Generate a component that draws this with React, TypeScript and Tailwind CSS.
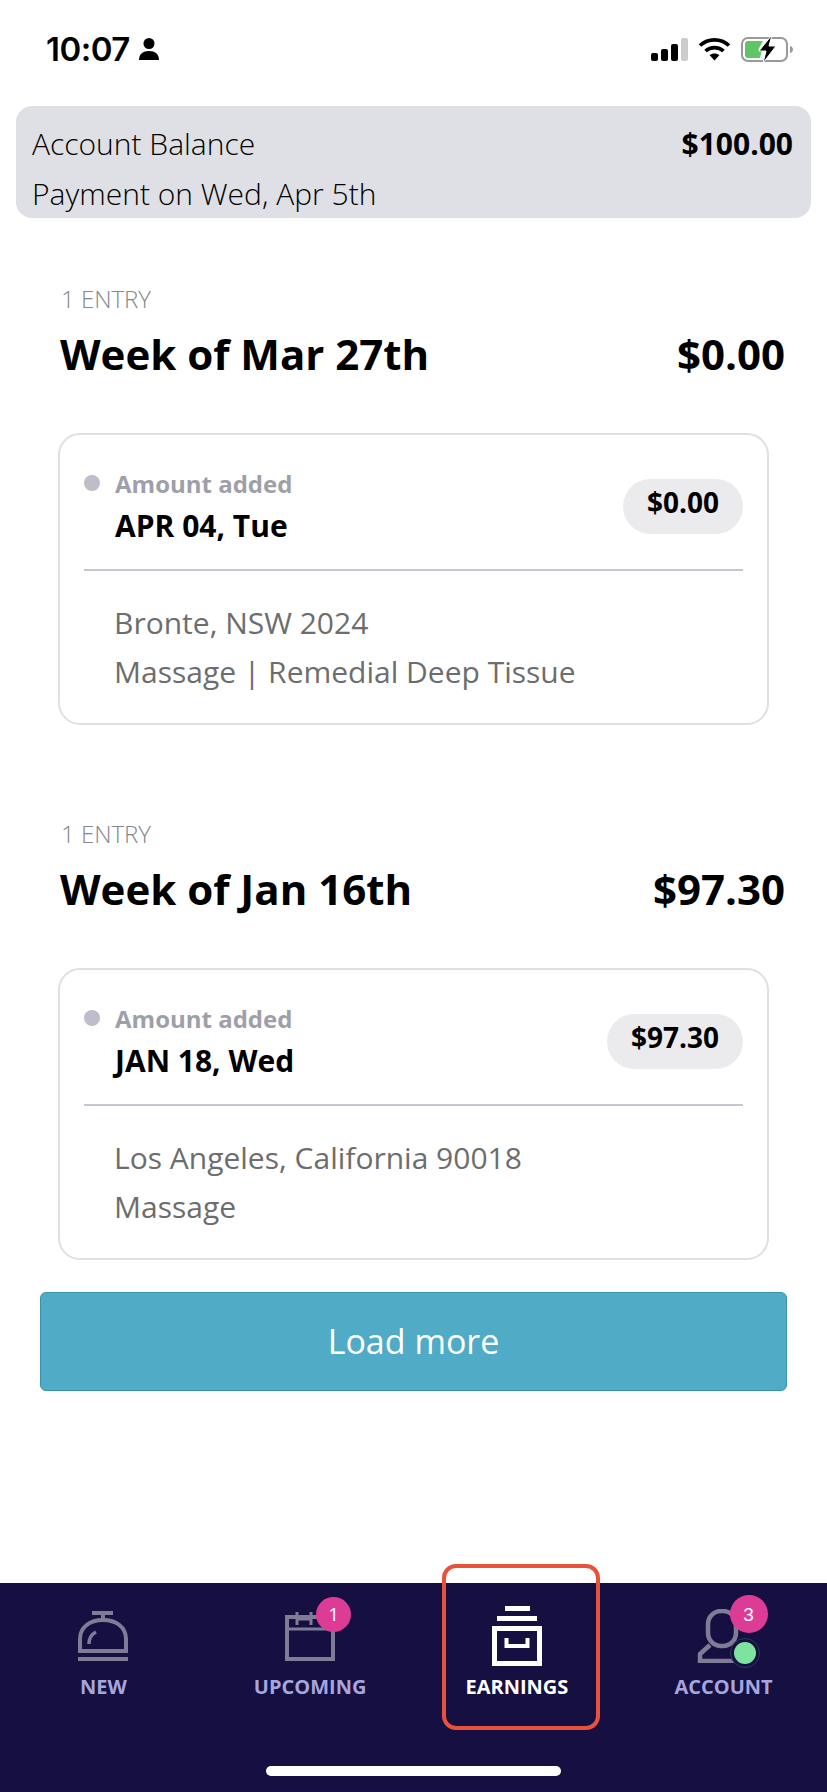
const FONT = "font-['Open_Sans',sans-serif]";

interface EntryProps {
  week: string;
  total: string;
  date: string;
  lines: string[];
}

function Entry({ week, total, date, lines }: EntryProps) {
  return (
    <section>
      <div className="pl-[61px] pr-[42px]">
        <p className="text-[24px] leading-[30px] font-light text-[#85858c]">1 ENTRY</p>
        <div className="mt-[14px] flex items-center justify-between text-[42px] leading-[52px] font-bold text-black">
          <h2 className="-ml-[1px]">{week}</h2>
          <span>{total}</span>
        </div>
      </div>
      <div className="mx-[58px] mt-[53px] h-[292px] rounded-[22px] border-2 border-[#dfdfe4] px-[24px] pt-[34px]">
        <div className="flex h-[102px] items-start justify-between border-b-2 border-[#c5c6d2]">
          <div className="flex items-start">
            <span className="mt-[6px] h-[16px] w-[16px] rounded-full bg-[#bdbec9]" />
            <div className="ml-[15px]">
              <p className="-mt-[1px] text-[24px] leading-[32px] font-bold text-[#9e9fa9]">Amount added</p>
              <p className="mt-[6px] text-[30px] leading-[40px] font-bold text-black">{date}</p>
            </div>
          </div>
          <span className="mt-[10px] flex h-[55px] items-start rounded-[28px] bg-[#ebebed] px-[24px] pt-[5px] text-[28px] leading-[36px] font-bold text-black">
            {total}
          </span>
        </div>
        <div className="pl-[30px] pt-[27px] text-[30px] leading-[49px] text-[#6d6d6d]">
          {lines.map((line) => (
            <p key={line}>{line}</p>
          ))}
        </div>
      </div>
    </section>
  );
}

function StatusBar() {
  return (
    <div className="flex h-[106px] items-start justify-between pl-[46px] pr-[33px] pt-[30px]">
      <div className="flex items-center gap-[8px]">
        <span className="font-['Inter',sans-serif] text-[33px] leading-[38px] font-semibold tracking-[-0.5px] text-black">
          10:07
        </span>
        <svg width="22" height="24" viewBox="0 0 22 24" fill="#000">
          <circle cx="11" cy="6.5" r="5.5" />
          <path d="M1 23c0-6 4-9 10-9s10 3 10 9z" />
        </svg>
      </div>
      <div className="mt-[5px] flex items-center gap-[10px]">
        <svg width="37" height="23" viewBox="0 0 37 23">
          <rect x="0" y="15" width="7" height="8" rx="2" fill="#000" />
          <rect x="10" y="11" width="7" height="12" rx="2" fill="#000" />
          <rect x="20" y="6" width="7" height="17" rx="2" fill="#000" />
          <rect x="30" y="0" width="7" height="23" rx="2" fill="#ccc" />
        </svg>
        <svg width="33" height="24" viewBox="0 0 33 24" fill="none" stroke="#000" strokeWidth="3.6">
          <path d="M2 8.500C10 1 23 1 31 8.500" />
          <path d="M7.500 14C12.500 9.500 20.500 9.500 25.500 14" />
          <path d="M16.500 23.500l-5-5.400c3-2.200 7-2.200 10 0z" fill="#000" stroke="none" />
        </svg>
        <svg width="53" height="28" viewBox="0 0 53 28" fill="none">
          <rect x="1" y="3" width="45" height="23" rx="6" stroke="#999" strokeWidth="2" />
          <path d="M4 9a3 3 0 0 1 3-3h15l-5 9h4l-2 8H7a3 3 0 0 1-3-3z" fill="#5fc565" />
          <path d="M49 11c2 .5 3 2 3 3.500s-1 3-3 3.500z" fill="#999" />
          <path d="M31 0L18 16h7l-3 12 13-17h-7z" fill="#000" stroke="#fff" strokeWidth="1" />
        </svg>
      </div>
    </div>
  );
}

function BellIcon() {
  return (
    <svg width="50" height="50" viewBox="0 0 50 50" fill="none" stroke="#807c96" strokeWidth="4" className="mb-[2px]">
      <path d="M14 2h21" />
      <path d="M25 2v8" />
      <path d="M2 40V28C2 16 12 9 25 9s23 7 23 19v12z" />
      <path d="M11 33c0-6 3-10 7-12" strokeWidth="3.500" />
      <path d="M0 48h50" />
    </svg>
  );
}

function CalendarIcon() {
  return (
    <svg width="50" height="50" viewBox="0 0 50 50" fill="none" stroke="#807c96" strokeWidth="4" className="mb-[2px]">
      <path d="M2 6h46v42H2z" />
      <path d="M2 18h46" strokeWidth="3" />
      <path d="M12 1v13M26 1v13" strokeWidth="3" />
      <path d="M12 8h14" strokeWidth="3" />
    </svg>
  );
}

function ArchiveIcon() {
  return (
    <svg width="50" height="60" viewBox="0 0 50 60" fill="none" stroke="#fff" className="-mb-[3px]">
      <path d="M13 2.500h25" strokeWidth="5" />
      <path d="M5 12.500h40" strokeWidth="5" />
      <path d="M2.500 22.500h45v35h-45z" strokeWidth="5" />
      <path d="M14.500 32v8h21v-8" strokeWidth="4" />
    </svg>
  );
}

function PersonIcon() {
  return (
    <svg width="42" height="54" viewBox="0 0 42 54" fill="none" stroke="#807c96" strokeWidth="4.500" className="-ml-[12px]">
      <rect x="11" y="2" width="28" height="35" rx="13" />
      <path d="M13 36L3 45v7h34" />
    </svg>
  );
}

const BADGE =
  "absolute flex items-center justify-center rounded-full bg-[#dd3c96] text-[19px] leading-none text-white";

function Tab({ label, active, children }: { label: string; active?: boolean; children: React.ReactNode }) {
  return (
    <div className="flex flex-col items-center">
      <div className="relative flex h-[60px] w-[60px] items-end justify-center">{children}</div>
      <span
        className={`mt-[12px] text-[20px] leading-[24px] font-bold ${active ? "text-white" : "text-[#a5a6dd]"}`}
      >
        {label}
      </span>
    </div>
  );
}

export default function App() {
  return (
    <div className={`${FONT} relative flex h-[1792px] w-[827px] flex-col overflow-hidden bg-white`}>
      <StatusBar />

      <div className="mx-[16px] flex h-[112px] flex-col overflow-hidden rounded-[16px] bg-[#dfe0e5] pl-[16px] pr-[18px] pt-[19px]">
        <div className="flex items-center justify-between text-[30px] leading-[38px]">
          <span className="font-light text-black">Account Balance</span>
          <span className="font-bold text-black">$100.00</span>
        </div>
        <p className="mt-[12px] text-[30px] leading-[38px] font-light text-black">Payment on Wed, Apr 5th</p>
      </div>

      <div className="mt-[66px] flex flex-col gap-[94px]">
        <Entry
          week="Week of Mar 27th"
          total="$0.00"
          date="APR 04, Tue"
          lines={["Bronte, NSW 2024", "Massage | Remedial Deep Tissue"]}
        />
        <Entry
          week="Week of Jan 16th"
          total="$97.30"
          date="JAN 18, Wed"
          lines={["Los Angeles, California 90018", "Massage"]}
        />
      </div>

      <button className="mx-[40px] mt-[32px] h-[99px] rounded-[6px] border border-[#3a93ad] bg-[#4fabc6] text-[34px] text-white">
        Load more
      </button>

      <nav className="mt-auto flex h-[209px] flex-col bg-[#160f42]">
        <div className="grid grid-cols-4 pt-[20px]">
          <Tab label="NEW">
            <BellIcon />
          </Tab>
          <Tab label="UPCOMING">
            <CalendarIcon />
            <span className={`${BADGE} -top-[6px] left-[36px] h-[35px] w-[35px]`}>1</span>
          </Tab>
          <Tab label="EARNINGS" active>
            <ArchiveIcon />
          </Tab>
          <Tab label="ACCOUNT">
            <PersonIcon />
            <span className={`${BADGE} -top-[8px] left-[36px] h-[38px] w-[38px] font-['Liberation_Sans',sans-serif]`}>3</span>
            <span className="absolute left-[36px] top-[35px] h-[30px] w-[30px] rounded-full border border-[#2a3a5a] bg-[#160f42] p-[3px]">
              <span className="block h-full w-full rounded-full bg-[#7fe3a0]" />
            </span>
          </Tab>
        </div>
        <div className="mx-auto mt-auto mb-[16px] h-[10px] w-[295px] rounded-full bg-white" />
      </nav>

      {/* tutorial highlight around the active tab */}
      <div className="absolute left-[442px] top-[1564px] h-[166px] w-[158px] rounded-[14px] border-4 border-[#e8523b]" />
    </div>
  );
}
